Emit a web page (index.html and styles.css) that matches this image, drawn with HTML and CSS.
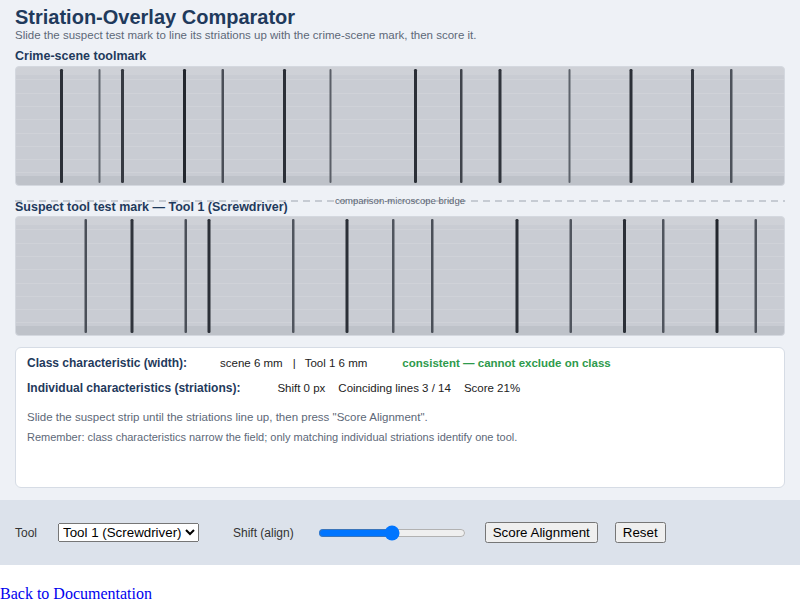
FILE: index.html
```html
<!DOCTYPE html>
<html>
  <head>
  <meta name="viewport" content="width=device-width, initial-scale=1.0">
  <meta charset="UTF-8">
  <link rel="stylesheet" href="styles.css">
  </head>
<body>

<div class="app">
  <div class="app-head">
    <h1>Striation-Overlay Comparator</h1>
    <p class="subtitle">Slide the suspect test mark to line its striations up with the crime-scene mark, then score it.</p>
  </div>

  <div class="bench">
    <div class="strip-title">Crime-scene toolmark</div>
    <div class="strip">
      <svg class="marks" viewBox="0 0 768 118" preserveAspectRatio="none">
        <rect x="44" y="2" width="3" height="114" rx="1.2" fill="#2b2f37"/>
        <rect x="82.5" y="2" width="2" height="114" rx="1" fill="#61666f"/>
        <rect x="105" y="2" width="3" height="114" rx="1.2" fill="#363a42"/>
        <rect x="167" y="2" width="3" height="114" rx="1.2" fill="#22262d"/>
        <rect x="205.5" y="2" width="2.5" height="114" rx="1" fill="#4a4e57"/>
        <rect x="267" y="2" width="3" height="114" rx="1.2" fill="#2b2f37"/>
        <rect x="313.5" y="2" width="2" height="114" rx="1" fill="#5a5e67"/>
        <rect x="398" y="2" width="3" height="114" rx="1.2" fill="#2b2f37"/>
        <rect x="444" y="2" width="2.5" height="114" rx="1" fill="#40444c"/>
        <rect x="482.5" y="2" width="3" height="114" rx="1.2" fill="#30343c"/>
        <rect x="552.5" y="2" width="2" height="114" rx="1" fill="#5d626b"/>
        <rect x="613.5" y="2" width="3" height="114" rx="1.2" fill="#2b2f37"/>
        <rect x="675" y="2" width="3" height="114" rx="1.2" fill="#353942"/>
        <rect x="714" y="2" width="2.5" height="114" rx="1" fill="#4d525b"/>
      </svg>
    </div>

    <div class="bridge"><span class="bridge-label">comparison-microscope bridge</span></div>

    <div class="strip-title suspect-title">Suspect tool test mark — Tool 1 (Screwdriver)</div>
    <div class="strip">
      <svg class="marks" viewBox="0 0 768 118" preserveAspectRatio="none">
        <rect x="68.5" y="2" width="2.5" height="114" rx="1" fill="#4a4f58"/>
        <rect x="114.5" y="2" width="3" height="114" rx="1.2" fill="#30343c"/>
        <rect x="168.5" y="2" width="2.5" height="114" rx="1" fill="#4a4f58"/>
        <rect x="191.5" y="2" width="3" height="114" rx="1.2" fill="#2b2f37"/>
        <rect x="276" y="2" width="2.5" height="114" rx="1" fill="#50555e"/>
        <rect x="329.5" y="2" width="3" height="114" rx="1.2" fill="#2b2f37"/>
        <rect x="376" y="2" width="2.5" height="114" rx="1" fill="#50555e"/>
        <rect x="415" y="2" width="2.5" height="114" rx="1" fill="#4a4f58"/>
        <rect x="499.5" y="2" width="3" height="114" rx="1.2" fill="#2b2f37"/>
        <rect x="553.5" y="2" width="2.5" height="114" rx="1" fill="#50555e"/>
        <rect x="607" y="2" width="3" height="114" rx="1.2" fill="#2b2f37"/>
        <rect x="646" y="2" width="2.5" height="114" rx="1" fill="#50555e"/>
        <rect x="699.5" y="2" width="3" height="114" rx="1.2" fill="#22262d"/>
        <rect x="738.5" y="2" width="2.5" height="114" rx="1" fill="#50555e"/>
      </svg>
    </div>

    <div class="readout">
      <div class="readout-row">
        <span class="readout-label">Class characteristic (width):</span>
        <span class="val first">scene 6 mm</span><span class="sep">|</span><span class="val">Tool 1 6 mm</span>
        <span class="verdict">consistent — cannot exclude on class</span>
      </div>
      <div class="readout-row">
        <span class="readout-label">Individual characteristics (striations):</span>
        <span class="val first wide">Shift 0 px</span>
        <span class="val next">Coinciding lines 3 / 14</span>
        <span class="val next">Score 21%</span>
      </div>
      <p class="note status">Slide the suspect strip until the striations line up, then press "Score Alignment".</p>
      <p class="note">Remember: class characteristics narrow the field; only matching individual striations identify one tool.</p>
    </div>
  </div>

  <div class="controls">
    <label class="ctl-label" for="tool-select">Tool</label>
    <select id="tool-select" class="tool-select">
      <option>Tool 1 (Screwdriver)</option>
      <option>Tool 2 (Pry bar)</option>
      <option>Tool 3 (Chisel)</option>
    </select>
    <label class="ctl-label shift-label" for="shift">Shift (align)</label>
    <input id="shift" class="shift" type="range" min="-60" max="60" value="0">
    <button class="btn score-btn">Score Alignment</button>
    <button class="btn reset-btn">Reset</button>
  </div>
</div>

<p class="back"><a href="#">Back to Documentation</a></p>

</body>
</html>
```

FILE: styles.css
```css
body{
margin: 0;
background-color: #ffffff;
font-family: "Liberation Sans", Arial, sans-serif;
}

.app{
height: 565px;
display: flex;
flex-direction: column;
background-color: #eef1f6;
}

.app-head{
padding: 7px 15px 0;
}

h1{
margin: 0;
font-size: 20px;
line-height: 21px;
color: #1f3a5c;
}

.subtitle{
margin: 0;
font-size: 11.5px;
line-height: 14px;
color: #5d6878;
}

.bench{
flex: 1;
display: flex;
flex-direction: column;
padding: 0 15px;
}

.strip-title{
margin: 6px 0 2px;
font-size: 12.5px;
line-height: 16px;
font-weight: bold;
color: #1f3a5c;
}

.suspect-title{
margin: -4px 0 1px;
}

.strip{
height: 118px;
border: 1px solid #d4d8df;
border-radius: 4px;
overflow: hidden;
background:
    linear-gradient(to bottom, rgba(255,255,255,0.1) 0, rgba(255,255,255,0.1) 8px, transparent 8px, transparent 109px, #bec2c9 109px),
    repeating-linear-gradient(to bottom, transparent 0, transparent 12.3px, rgba(255,255,255,0.12) 12.3px, rgba(255,255,255,0.12) 13.3px),
    #c9ccd3;
}

.marks{
display: block;
width: 100%;
height: 100%;
}

.bridge{
position: relative;
height: 17px;
}

.bridge::before{
content: "";
position: absolute;
left: 0;
right: 0;
top: 14px;
height: 2px;
background: repeating-linear-gradient(to right, #c6cbd3 0, #c6cbd3 7px, transparent 7px, transparent 12px);
}

.bridge-label{
position: absolute;
left: 50%;
top: 15px;
transform: translate(-50%, -50%);
font-size: 9.5px;
line-height: 12px;
color: #5b6472;
white-space: nowrap;
}

.readout{
flex: 1;
margin: 11px 0 12px;
padding: 7px 11px;
background-color: #ffffff;
border: 1px solid #d6dce5;
border-radius: 6px;
}

.readout-row{
display: flex;
align-items: baseline;
line-height: 16px;
margin-bottom: 9px;
}

.readout-label{
font-size: 12px;
font-weight: bold;
color: #1f3a5c;
}

.val{
font-size: 11.5px;
color: #222222;
}

.val.first{
margin-left: 33px;
}

.val.first.wide{
margin-left: 37px;
}

.val.next{
margin-left: 13px;
}

.sep{
font-size: 11.5px;
color: #222222;
margin: 0 9px 0 10px;
}

.verdict{
margin-left: 35px;
font-size: 11.5px;
font-weight: bold;
color: #2e9a4c;
}

.note{
margin: 4px 0 0;
font-size: 11px;
line-height: 16px;
color: #5d6878;
}

.note.status{
font-size: 11.5px;
}

.readout-row + .note{
margin-top: 13px;
}

.controls{
height: 65px;
display: flex;
align-items: center;
padding: 0 15px;
background-color: #dce2eb;
}

.ctl-label{
font-size: 12px;
color: #333333;
margin-right: 21px;
}

.tool-select{
font-family: "Liberation Sans", Arial, sans-serif;
font-size: 13.33px;
margin: 0 34px 0 0;
}

.shift-label{
margin-right: 24px;
}

.shift{
width: 148px;
margin: 0;
}

.btn{
font-family: "Liberation Sans", Arial, sans-serif;
font-size: 13.33px;
margin: 0;
}

.score-btn{
margin-left: 19px;
}

.reset-btn{
margin-left: 17px;
}

.back{
margin: 20px 0 0;
font-family: "Liberation Serif", "Times New Roman", serif;
font-size: 16px;
}
```
